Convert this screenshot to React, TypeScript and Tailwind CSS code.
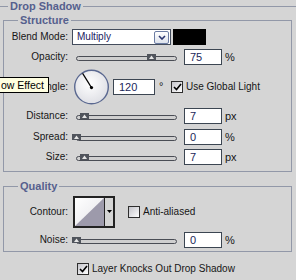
import React from "react";

function Slider({ at }: { at: number }) {
  return (
    <div className="relative w-[116px] h-[16px] flex items-center">
      <div className="ml-[8px] mt-[2px] w-[101px] h-[5px] rounded-full border border-[#4a4d55] bg-[#cfcfcf]" />
      <svg
        style={{ left: at }}
        className="absolute top-[5px]"
        width="9"
        height="6"
        viewBox="0 0 9 6"
      >
        <rect x="0" y="0" width="9" height="6" fill="#50545c" />
        <polygon points="2,5 4.5,1.5 7,5" fill="#e6e6e6" />
      </svg>
    </div>
  );
}

function Field({ v, w = "w-[38px]" }: { v: string; w?: string }) {
  return (
    <div
      className={`${w} h-[16px] bg-white border border-[#3c4652] pl-[5px] flex items-center text-[11px] text-[#1a1f5a]`}
    >
      {v}
    </div>
  );
}

function Check({ on }: { on?: boolean }) {
  return (
    <span className="w-[12px] h-[12px] border border-[#2e2e2e] bg-linear-to-br from-[#c4c4ca] to-white flex items-center justify-center">
      {on && (
        <svg width="9" height="8" viewBox="0 0 9 8">
          <path d="M1 4 L3.5 6.5 L8 1" fill="none" stroke="#000" strokeWidth="1.6" />
        </svg>
      )}
    </span>
  );
}

function Label({ children }: { children: React.ReactNode }) {
  return <span className="w-[64px] text-right shrink-0">{children}</span>;
}

export default function App() {
  return (
    <div className="relative w-[296px] h-[280px] overflow-hidden bg-[#d5d5d5] font-['Liberation_Sans',Arial,sans-serif] text-[10px] leading-none text-[#161616]">
      <fieldset className="border-0 border-t border-[#9298a8]">
        <legend className="ml-[8px] px-[2px] text-[11px] leading-[12px] font-bold text-[#56608e]">
          Drop Shadow
        </legend>

        {/* Structure */}
        <fieldset className="mt-[2px] ml-[3px] mr-[4px] border border-[#9298a8] pb-[6px]">
          <legend className="ml-[14px] px-[2px] text-[11px] leading-[12px] font-bold text-[#56608e]">
            Structure
          </legend>

          <div className="pt-[3px] flex items-center h-[19px]">
            <Label>Blend Mode:</Label>
            <div className="ml-[4px] w-[99px] h-[16px] bg-white border border-[#434c5c] flex items-center">
              <span className="pl-[4px] flex-1 text-[#1a1c60]">Multiply</span>
              <span className="w-[15px] h-[13px] mr-[1px] rounded-[2px] border border-[#6b7ca3] bg-linear-to-b from-white to-[#dde2ec] flex items-center justify-center">
                <svg width="8" height="5" viewBox="0 0 8 5">
                  <path d="M1 1 L4 4 L7 1" fill="none" stroke="#2a3670" strokeWidth="1.6" />
                </svg>
              </span>
            </div>
            <div className="ml-[2px] w-[33px] h-[16px] bg-black" />
          </div>

          <div className="mt-[4px] flex items-center h-[16px]">
            <Label>Opacity:</Label>
            <Slider at={79} />
            <Field v="75" />
            <span className="ml-[3px] text-[11px]">%</span>
          </div>

          <div className="mt-[4px] flex items-center h-[36px]">
            <Label>Angle:</Label>
            <svg className="ml-[6px]" width="36" height="36" viewBox="0 0 36 36">
              <defs>
                <radialGradient id="dial" cx="45%" cy="40%" r="65%">
                  <stop offset="0" stopColor="#ffffff" />
                  <stop offset="1" stopColor="#dcdde3" />
                </radialGradient>
              </defs>
              <circle cx="17.5" cy="18" r="16.8" fill="url(#dial)" stroke="#5a6890" strokeWidth="1.4" />
              <line x1="17.5" y1="18.6" x2="8.6" y2="4.4" stroke="#000" strokeWidth="1.2" />
              <circle cx="17.5" cy="18.6" r="1.6" fill="#000" />
            </svg>
            <span className="ml-[3px]">
              <Field v="120" w="w-[42px]" />
            </span>
            <span className="w-[16px] pl-[4px] self-start mt-[12px] text-[11px]">°</span>
            <Check on />
            <span className="ml-[3px]">Use Global Light</span>
          </div>

          <div className="mt-[3px] flex items-center h-[16px]">
            <Label>Distance:</Label>
            <Slider at={12} />
            <Field v="7" />
            <span className="ml-[3px] text-[11px]">px</span>
          </div>

          <div className="mt-[5px] flex items-center h-[16px]">
            <Label>Spread:</Label>
            <Slider at={4} />
            <Field v="0" />
            <span className="ml-[3px] text-[11px]">%</span>
          </div>

          <div className="mt-[4px] flex items-center h-[16px]">
            <Label>Size:</Label>
            <Slider at={12} />
            <Field v="7" />
            <span className="ml-[3px] text-[11px]">px</span>
          </div>
        </fieldset>

        {/* Quality */}
        <fieldset className="mt-[8px] ml-[3px] mr-[4px] border border-[#9298a8] pb-[3px]">
          <legend className="ml-[14px] px-[2px] text-[11px] leading-[12px] font-bold text-[#56608e]">
            Quality
          </legend>

          <div className="pt-[4px] flex items-center">
            <Label>Contour:</Label>
            <div className="ml-[5px] w-[42px] h-[32px] border-2 border-[#222] flex">
              <svg width="29" height="28" viewBox="0 0 29 28">
                <defs>
                  <linearGradient id="cbg" x1="0" y1="0" x2="1" y2="1">
                    <stop offset="0" stopColor="#ffffff" />
                    <stop offset="1" stopColor="#e4e4e8" />
                  </linearGradient>
                </defs>
                <rect width="29" height="28" fill="url(#cbg)" />
                <polygon points="0,28 29,0 29,28" fill="#9d9aab" />
              </svg>
              <div className="flex-1 border-l border-[#222] flex items-center justify-center pb-[2px]">
                <svg width="5" height="3" viewBox="0 0 5 3">
                  <polygon points="0,0 5,0 2.5,3" fill="#000" />
                </svg>
              </div>
            </div>
            <span className="ml-[13px]">
              <Check />
            </span>
            <span className="ml-[3px]">Anti-aliased</span>
          </div>

          <div className="mt-[4px] flex items-center h-[16px]">
            <Label>Noise:</Label>
            <Slider at={4} />
            <Field v="0" />
            <span className="ml-[3px] text-[11px]">%</span>
          </div>
        </fieldset>

        <div className="mt-[11px] pl-[77px] flex items-center h-[12px]">
          <Check on />
          <span className="ml-[3px]">Layer Knocks Out Drop Shadow</span>
        </div>
      </fieldset>

      {/* tooltip */}
      <div className="absolute left-0 top-[77px] w-[49px] h-[16px] bg-[#ffffe1] border border-l-0 border-black pl-[1px] flex items-center text-[10.5px] text-black whitespace-nowrap">
        ow Effect
      </div>
    </div>
  );
}
